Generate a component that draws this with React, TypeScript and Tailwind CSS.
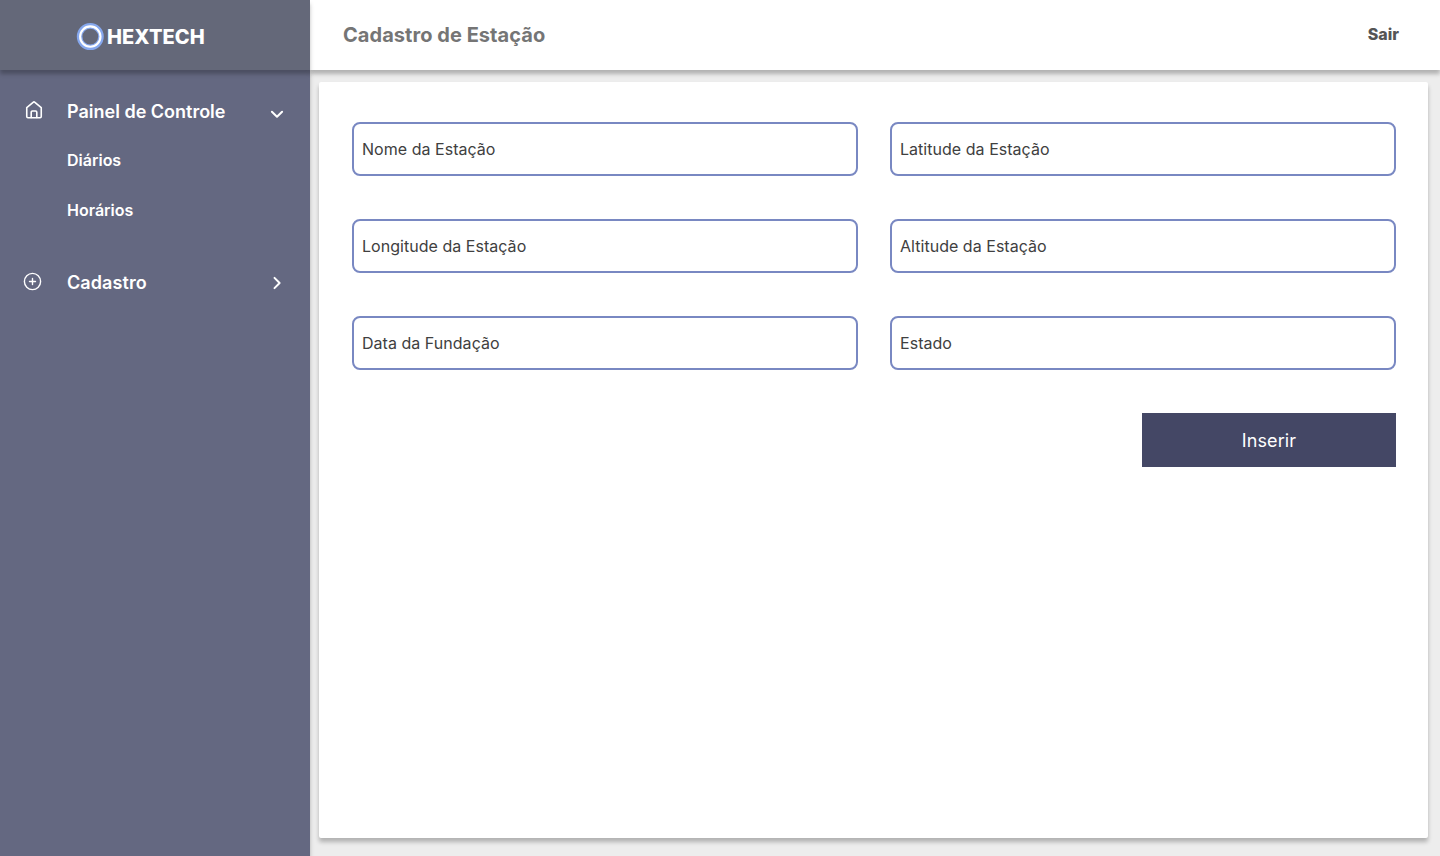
import React from "react";

const fields = [
  "Nome da Estação",
  "Latitude da Estação",
  "Longitude da Estação",
  "Altitude da Estação",
  "Data da Fundação",
  "Estado",
];

function Logo() {
  return (
    <svg width="28" height="28" viewBox="0 0 28 28" fill="none">
      <circle cx="14.3" cy="13.6" r="10.7" stroke="#86A8EE" strokeWidth="5.6" />
      <circle cx="14.3" cy="13.6" r="10.2" stroke="#FFFFFF" strokeWidth="2.1" />
    </svg>
  );
}

function HomeIcon() {
  return (
    <svg width="18" height="20" viewBox="0 0 18 20" fill="none" stroke="#fff" strokeWidth="1.6" strokeLinecap="round" strokeLinejoin="round">
      <path d="M1.75 7.6 8.1 2.3a1.4 1.4 0 0 1 1.8 0l6.35 5.3v8.9a1.2 1.2 0 0 1-1.2 1.2H2.95a1.2 1.2 0 0 1-1.2-1.2Z" />
      <path d="M6.2 17.5v-5.3a1.2 1.2 0 0 1 1.2-1.2h3.2a1.2 1.2 0 0 1 1.2 1.2v5.3" />
    </svg>
  );
}

function PlusIcon() {
  return (
    <svg width="20" height="20" viewBox="0 0 20 20" fill="none" stroke="#fff" strokeWidth="1.4" strokeLinecap="round">
      <circle cx="9.5" cy="10.5" r="8.1" />
      <path d="M9.5 7.5v6M6.5 10.5h6" />
    </svg>
  );
}

function Sidebar() {
  return (
    <nav className="w-[310px] shrink-0 bg-[#646881] text-white shadow-[0_4px_4px_rgba(0,0,0,0.25)]">
      <div className="flex h-[82px] items-center pl-[25px]">
        <span className="mt-[-3px] flex w-[42px]"><HomeIcon /></span>
        <span className="w-[203px] text-[18px] font-semibold">Painel de Controle</span>
        <svg className="mt-[6px]" width="14" height="9" viewBox="0 0 14 9" fill="none" stroke="#fff" strokeWidth="2" strokeLinecap="round" strokeLinejoin="round">
          <path d="M1.9 1.7 7 6.8l5.1-5.1" />
        </svg>
      </div>
      <div className="flex flex-col pl-[67px] text-[16px] font-semibold leading-[24px]">
        <span className="mt-[-4px]">Diários</span>
        <span className="mt-[26px]">Horários</span>
      </div>
      <div className="mt-[45px] flex h-[30px] items-center pl-[23px]">
        <span className="mt-[-2px] flex w-[44px]"><PlusIcon /></span>
        <span className="w-[205px] text-[18px] font-semibold tracking-[0.005em]">Cadastro</span>
        <svg className="mt-[2px]" width="10" height="14" viewBox="0 0 10 14" fill="none" stroke="#fff" strokeWidth="2" strokeLinecap="round" strokeLinejoin="round">
          <path d="M2.5 1.9 7.6 7l-5.1 5.1" />
        </svg>
      </div>
    </nav>
  );
}

export default function App() {
  return (
    <div className="flex h-[856px] w-[1440px] flex-col overflow-hidden bg-[#EDEDED] font-['Inter',sans-serif]">
      <header className="relative z-10 flex h-[70px] shrink-0">
        <div className="relative z-10 flex w-[310px] items-center bg-[#646879] pl-[76px] pt-[3px] text-white shadow-[0_4px_4px_rgba(0,0,0,0.25)]">
          <Logo />
          <span className="ml-[3px] text-[20px] font-extrabold tracking-[0.005em]">HEXTECH</span>
        </div>
        <div className="flex flex-1 items-center justify-between bg-white pl-[33px] pr-[41px] shadow-[0_4px_4px_rgba(0,0,0,0.25)]">
          <h1 className="text-[20px] font-bold tracking-[0.0025em] text-[#757575]">Cadastro de Estação</h1>
          <a className="pb-[2px] text-[16px] font-extrabold text-[#555555]">Sair</a>
        </div>
      </header>
      <div className="flex min-h-0 flex-1">
        <Sidebar />
        <main className="mb-[18px] ml-[9px] mr-[12px] mt-[12px] flex-1 rounded-[2px] bg-white pl-[33px] pr-8 pt-[40px] shadow-[0_4px_4px_rgba(0,0,0,0.25)]">
          <form className="grid grid-cols-2 gap-x-8 gap-y-[43px]">
            {fields.map((name) => (
              <input
                key={name}
                placeholder={name}
                className="h-[54px] w-full rounded-[8px] border-2 border-[#7988C2] bg-white px-2 text-[16px] tracking-[0.002em] text-[#404040] placeholder:text-[#404040]"
              />
            ))}
            <button type="button" className="col-start-2 h-[54px] w-[254px] justify-self-end bg-[#444765] text-[18px] tracking-[0.005em] text-white">
              Inserir
            </button>
          </form>
        </main>
      </div>
    </div>
  );
}
